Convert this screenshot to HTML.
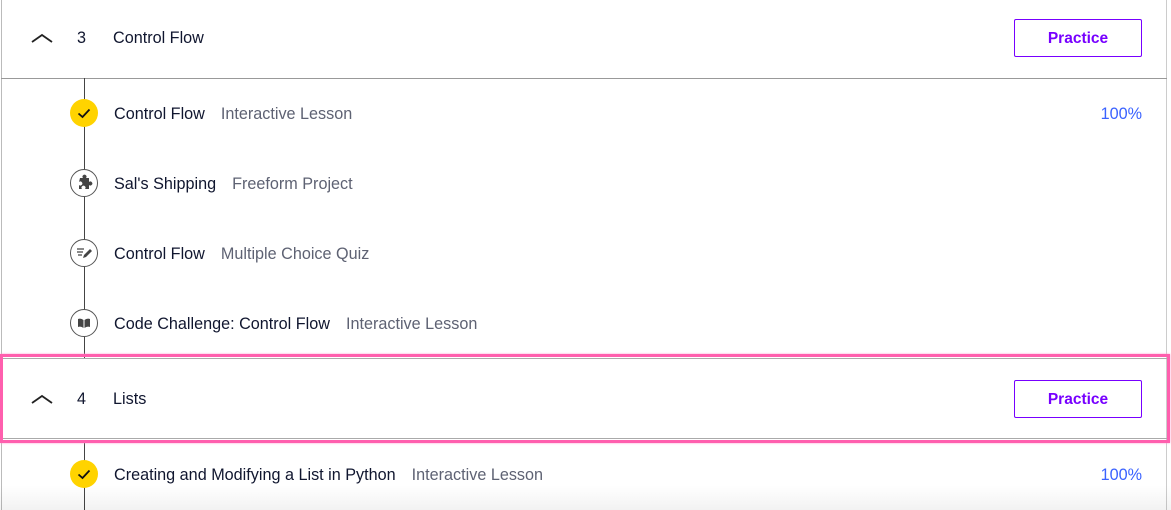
<!DOCTYPE html>
<html><head><meta charset="utf-8"><style>
*{box-sizing:border-box;margin:0;padding:0}
body{width:1171px;height:510px;overflow:hidden;background:#fff;font-family:"Liberation Sans",sans-serif;font-size:16.2px;color:#10162f;position:relative}
.abs{position:absolute}
.t{position:absolute;white-space:nowrap;line-height:20px}
.sub{color:#5e6273;margin-left:16px}
.btn{position:absolute;left:1014px;width:128px;height:38px;border:1px solid #7700ff;border-radius:2px;color:#7700ff;font-weight:bold;font-size:15.5px;text-align:center;line-height:37px}
.c{position:absolute;left:70px;width:28px;height:28px;border-radius:50%;background:#fff;border:1px solid #555}
.y{background:#ffd300;border:none}
.pct{position:absolute;right:29px;color:#3a62ff;line-height:20px}
</style></head><body>
<div class="abs" style="left:1px;top:0;width:1px;height:510px;background:#bbb"></div>
<div class="abs" style="left:1166px;top:0;width:1px;height:510px;background:#ccc"></div>
<div class="abs" style="left:1px;top:78px;width:1166px;height:1px;background:#999"></div>
<div class="abs" style="left:84px;top:78px;width:1px;height:280px;background:#444"></div>
<div class="abs" style="left:84px;top:440px;width:1px;height:70px;background:#444"></div>

<svg class="abs" style="left:31px;top:32px" width="22" height="12"><path d="M1 10 L11 3 L21 10" fill="none" stroke="#222" stroke-width="1.8"/></svg>
<div class="t" style="left:77px;top:28px">3</div>
<div class="t" style="left:113px;top:28px">Control Flow</div>
<div class="btn" style="top:19px">Practice</div>

<div class="c y" style="top:99px"><svg width="28" height="28"><path d="M8.5 14.5 L12.5 18 L19.5 10.5" fill="none" stroke="#111" stroke-width="1.8"/></svg></div>
<div class="t" style="left:114px;top:104px">Control Flow<span class="sub">Interactive Lesson</span></div>
<div class="pct" style="top:104px">100%</div>

<div class="c" style="top:169px"><svg width="26" height="26"><path d="M9 8h3a2 2 0 1 1 3 0h3v4a2 2 0 1 1 0 3v4h-4a2 2 0 1 0-3 0H8v-4a2 2 0 1 0 0-3z" fill="#444"/></svg></div>
<div class="t" style="left:114px;top:174px">Sal's Shipping<span class="sub">Freeform Project</span></div>

<div class="c" style="top:239px"><svg width="26" height="26"><path d="M6 9h7M6 12h6M7 15h4" stroke="#444" stroke-width="1.3"/><path d="M12 18l1-3 6-6 2 2-6 6z" fill="#444"/></svg></div>
<div class="t" style="left:114px;top:244px">Control Flow<span class="sub">Multiple Choice Quiz</span></div>

<div class="c" style="top:309px"><svg width="26" height="26"><path d="M7 9q3-1 5.5 1v8q-2.5-2-5.5-1zM19 9q-3-1-5.5 1v8q2.5-2 5.5-1z" fill="#444"/></svg></div>
<div class="t" style="left:114px;top:314px">Code Challenge: Control Flow<span class="sub">Interactive Lesson</span></div>

<div class="abs" style="left:0;top:354px;width:1170px;height:89px;border:3px solid #ff5fae;box-shadow:0 0 2px #ff9ad0"></div>
<div class="abs" style="left:3px;top:358px;width:1164px;height:1px;background:#aaa"></div>
<div class="abs" style="left:3px;top:438px;width:1164px;height:1px;background:#aaa"></div>
<svg class="abs" style="left:31px;top:393px" width="22" height="12"><path d="M1 10 L11 3 L21 10" fill="none" stroke="#222" stroke-width="1.8"/></svg>
<div class="t" style="left:77px;top:389px">4</div>
<div class="t" style="left:113px;top:389px">Lists</div>
<div class="btn" style="top:380px">Practice</div>

<div class="c y" style="top:460px"><svg width="28" height="28"><path d="M8.5 14.5 L12.5 18 L19.5 10.5" fill="none" stroke="#111" stroke-width="1.8"/></svg></div>
<div class="t" style="left:114px;top:465px">Creating and Modifying a List in Python<span class="sub">Interactive Lesson</span></div>
<div class="pct" style="top:465px">100%</div>
<div class="abs" style="left:0;top:485px;width:1171px;height:25px;background:linear-gradient(rgba(0,0,0,0),rgba(0,0,0,0.05))"></div>
</body></html>
